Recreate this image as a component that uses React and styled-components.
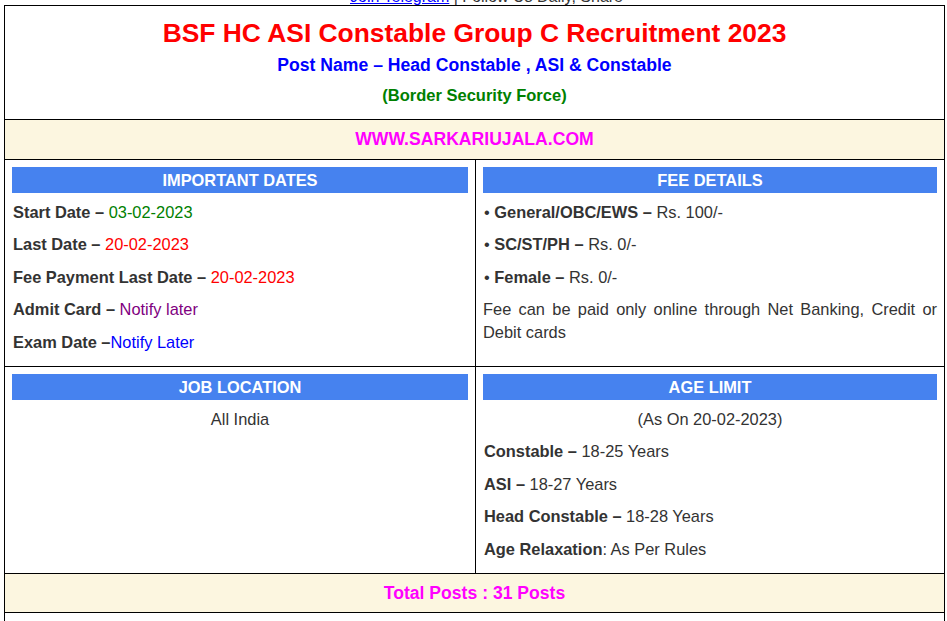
import styled, { createGlobalStyle } from "styled-components";

const GlobalStyle = createGlobalStyle`
  body {
    margin: 0;
    background: #fff;
    font-family: "Liberation Sans", Arial, sans-serif;
    color: #333;
  }
`;

const dates = [
  { label: "Start Date – ", value: "03-02-2023", color: "#008000" },
  { label: "Last Date – ", value: "20-02-2023", color: "#ff0000" },
  { label: "Fee Payment Last Date – ", value: "20-02-2023", color: "#ff0000" },
  { label: "Admit Card – ", value: "Notify later", color: "#800080" },
  { label: "Exam Date –", value: "Notify Later", color: "#0000ff" },
];

const fees = [
  { label: "General/OBC/EWS – ", value: "Rs. 100/-" },
  { label: "SC/ST/PH – ", value: "Rs. 0/-" },
  { label: "Female – ", value: "Rs. 0/-" },
];

const ages = [
  { label: "Constable – ", value: "18-25 Years" },
  { label: "ASI – ", value: "18-27 Years" },
  { label: "Head Constable – ", value: "18-28 Years" },
];

const App = () => {
  return (
    <Page>
      <GlobalStyle />
      <TopStrip>
        <TopLine>
          <TopLink href="#">Join Telegram</TopLink> | Follow Us Daily, Share
        </TopLine>
      </TopStrip>

      <Board>
        <Row>
          <TitleCell>
            <Title>BSF HC ASI Constable Group C Recruitment 2023</Title>
            <PostName>Post Name – Head Constable , ASI &amp; Constable</PostName>
            <Org>(Border Security Force)</Org>
          </TitleCell>
        </Row>

        <Row $cream>
          <BannerCell>WWW.SARKARIUJALA.COM</BannerCell>
        </Row>

        <Row $split>
          <Cell>
            <SectionHead>IMPORTANT DATES</SectionHead>
            {dates.map((d) => (
              <Line key={d.label}>
                <b>{d.label}</b>
                <Tint $color={d.color}>{d.value}</Tint>
              </Line>
            ))}
          </Cell>
          <Cell>
            <SectionHead>FEE DETAILS</SectionHead>
            {fees.map((f) => (
              <Line key={f.label}>
                • <b>{f.label}</b>
                {f.value}
              </Line>
            ))}
            <Line $justify>
              Fee can be paid only online through Net Banking, Credit or Debit
              cards
            </Line>
          </Cell>
        </Row>

        <Row $split>
          <Cell>
            <SectionHead>JOB LOCATION</SectionHead>
            <Line $center>All India</Line>
          </Cell>
          <Cell>
            <SectionHead>AGE LIMIT</SectionHead>
            <Line $center>(As On 20-02-2023)</Line>
            {ages.map((a) => (
              <Line key={a.label}>
                <b>{a.label}</b>
                {a.value}
              </Line>
            ))}
            <Line>
              <b>Age Relaxation</b>: As Per Rules
            </Line>
          </Cell>
        </Row>

        <Row $cream>
          <BannerCell $small>Total Posts : 31 Posts</BannerCell>
        </Row>

        <Row>
          <EmptyCell />
        </Row>
      </Board>
    </Page>
  );
};

export default App;

const Page = styled.div`
  width: 947px;
  height: 621px;
  overflow: hidden;
`;

const TopStrip = styled.div`
  height: 5px;
  overflow: hidden;
  display: flex;
  align-items: flex-end;
  padding-left: 350px;
`;

const TopLine = styled.div`
  font-size: 16px;
  line-height: 17px;
  color: #333;
  white-space: nowrap;
`;

const TopLink = styled.a`
  color: #0000ff;
  text-decoration: underline;
`;

const Board = styled.div`
  margin: 0 2px 0 4px;
  border: 1px solid #000;
  border-bottom: none;
`;

const Row = styled.div`
  display: grid;
  grid-template-columns: ${(p) => (p.$split ? "470px 1fr" : "1fr")};
  background: ${(p) => (p.$cream ? "#fcf6e0" : "#fff")};
  border-bottom: 1px solid #000;

  & > div + div {
    border-left: 1px solid #000;
  }
`;

const TitleCell = styled.div`
  padding: 10px 7px 13px;
  text-align: center;
`;

const Title = styled.div`
  color: #ff0000;
  font-weight: bold;
  font-size: 26.4px;
  line-height: 34px;
`;

const PostName = styled.div`
  margin-top: 3px;
  color: #0000ff;
  font-weight: bold;
  font-size: 17.6px;
  line-height: 24px;
`;

const Org = styled.div`
  margin-top: 7px;
  color: #008000;
  font-weight: bold;
  font-size: 16.5px;
  line-height: 22px;
`;

const BannerCell = styled.div`
  padding: ${(p) => (p.$small ? "8px 7px" : "7px 7px 8px")};
  text-align: center;
  color: #ff00ff;
  font-weight: bold;
  font-size: 17.6px;
  line-height: ${(p) => (p.$small ? "22px" : "24px")};
`;

const Cell = styled.div`
  padding: 7px 7px 3px;
  font-size: 16.4px;
`;

const SectionHead = styled.div`
  background: #4682ef;
  color: #fff;
  font-weight: bold;
  font-size: 16.4px;
  line-height: 26px;
  text-align: center;
  margin-bottom: 8px;
`;

const Line = styled.p`
  margin: 0 0 10px;
  line-height: 22.4px;
  color: #333;
  text-align: ${(p) => (p.$center ? "center" : p.$justify ? "justify" : "left")};
  padding-left: ${(p) => (p.$center || p.$justify ? "0" : "1px")};
`;

const Tint = styled.span`
  color: ${(p) => p.$color};
`;

const EmptyCell = styled.div`
  height: 40px;
`;
